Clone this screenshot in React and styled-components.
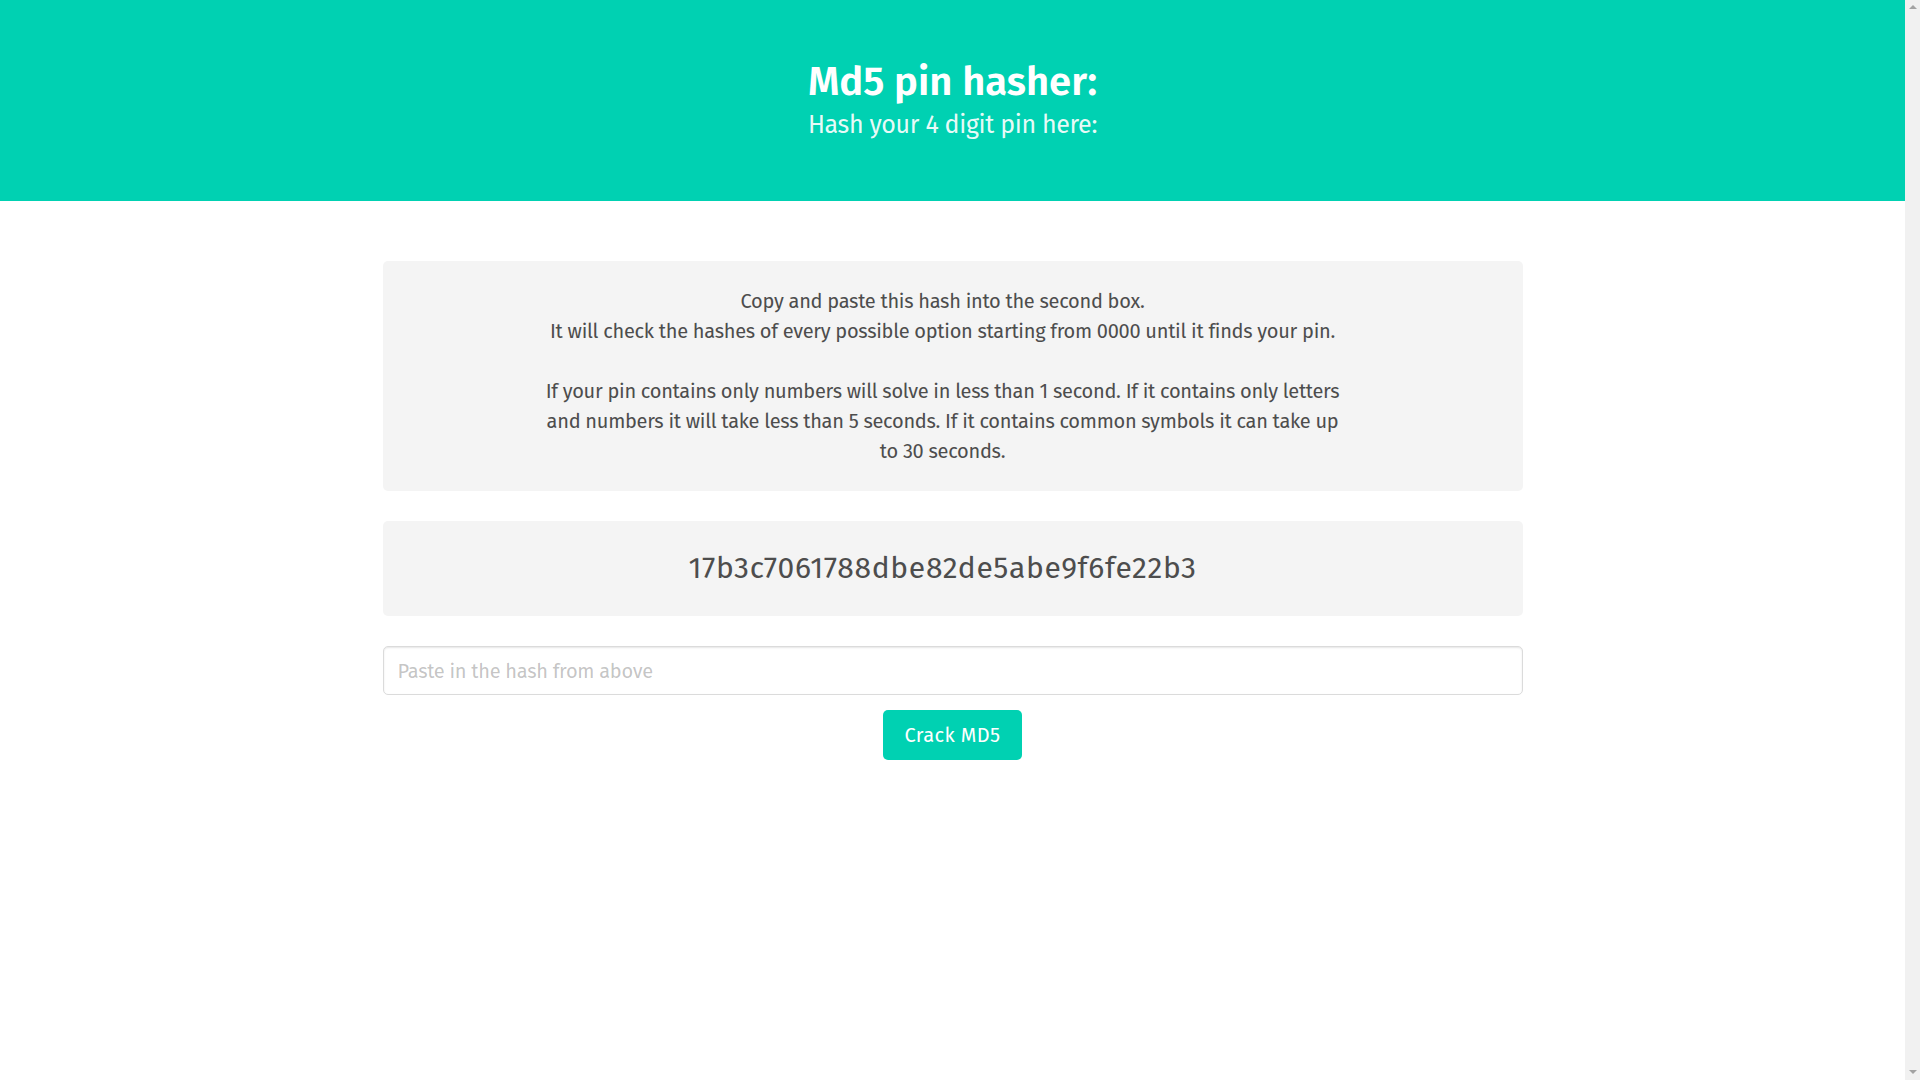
import React from "react";
import styled, { createGlobalStyle } from "styled-components";

const GlobalStyle = createGlobalStyle`
  html {
    background: #ffffff;
  }
  body {
    margin: 0 15px 0 0;
    font-family: "Fira Sans", Lato, "Noto Sans", sans-serif;
    font-size: 20px;
    font-weight: 400;
    line-height: 1.5;
    color: #4a4a4a;
  }
  *, *::before, *::after { box-sizing: border-box; }
`;

const Scrollbar = styled.div`
  position: fixed;
  top: 0;
  right: 0;
  bottom: 0;
  width: 15px;
  background: #f1f1f1;
  display: flex;
  flex-direction: column;
  justify-content: space-between;
  align-items: center;
  padding: 5px 0 6px;
`;

const Arrow = styled.span`
  width: 0;
  height: 0;
  border-left: 4px solid transparent;
  border-right: 4px solid transparent;
  ${(p) =>
    p.$down
      ? "border-top: 4px solid #a3a3a3;"
      : "border-bottom: 4px solid #a3a3a3;"}
`;

const Hero = styled.header`
  background: #00d1b2;
  padding: 60px 30px;
  text-align: center;
  color: #ffffff;
`;

const Title = styled.h1`
  margin: 0 0 5px;
  font-size: 40px;
  line-height: 1.125;
  font-weight: 600;
  color: #ffffff;
`;

const Subtitle = styled.h2`
  margin: 0;
  font-size: 25px;
  line-height: 1.25;
  font-weight: 400;
  letter-spacing: -0.35px;
  color: rgba(255, 255, 255, 0.92);
`;

const Section = styled.main`
  padding: 60px 30px;
`;

const Container = styled.div`
  max-width: 1140px;
  margin: 0 auto;
`;

const Notification = styled.div`
  background: #f4f4f4;
  border-radius: 5px;
  padding: 25px 50px 25px 30px;
  margin-bottom: 30px;
  text-align: center;
  font-size: ${(p) => (p.$large ? "30px" : "20px")};
  letter-spacing: ${(p) => (p.$large ? "0.7px" : "-0.28px")};
  line-height: 1.5;
  color: #4d4d4d;
`;

const Field = styled.div`
  margin-bottom: 15px;
`;

const Input = styled.input`
  display: block;
  width: 100%;
  height: 49px;
  padding: 0 12px 0 14px;
  font-family: inherit;
  font-size: 20px;
  font-weight: 400;
  letter-spacing: -0.28px;
  color: #363636;
  background: #ffffff;
  border: 1px solid #dbdbdb;
  border-radius: 5px;
  box-shadow: inset 0 1px 2px rgba(10, 10, 10, 0.1);
  outline: none;

  &::placeholder {
    color: rgba(54, 54, 54, 0.3);
  }
`;

const Actions = styled.div`
  display: flex;
  justify-content: center;
`;

const Button = styled.button`
  height: 50px;
  width: 139px;
  padding: 0;
  font-family: inherit;
  font-size: 20px;
  font-weight: 400;
  letter-spacing: 0.4px;
  color: #ffffff;
  background: #00d1b2;
  border: 1px solid transparent;
  border-radius: 5px;
  cursor: pointer;
`;

export default function App() {
  return (
    <>
      <GlobalStyle />
      <Hero>
        <Title>Md5 pin hasher:</Title>
        <Subtitle>Hash your 4 digit pin here:</Subtitle>
      </Hero>
      <Section>
        <Container>
          <Notification>
            Copy and paste this hash into the second box.
            <br />
            It will check the hashes of every possible option starting from 0000 until it finds your pin.
            <br />
            <br />
            If your pin contains only numbers will solve in less than 1 second. If it contains only letters
            <br />
            and numbers it will take less than 5 seconds. If it contains common symbols it can take up
            <br />
            to 30 seconds.
          </Notification>
          <Notification $large>17b3c7061788dbe82de5abe9f6fe22b3</Notification>
          <Field>
            <Input type="text" placeholder="Paste in the hash from above" />
          </Field>
          <Actions>
            <Button type="button">Crack MD5</Button>
          </Actions>
        </Container>
      </Section>
      <Scrollbar aria-hidden="true">
        <Arrow />
        <Arrow $down />
      </Scrollbar>
    </>
  );
}
